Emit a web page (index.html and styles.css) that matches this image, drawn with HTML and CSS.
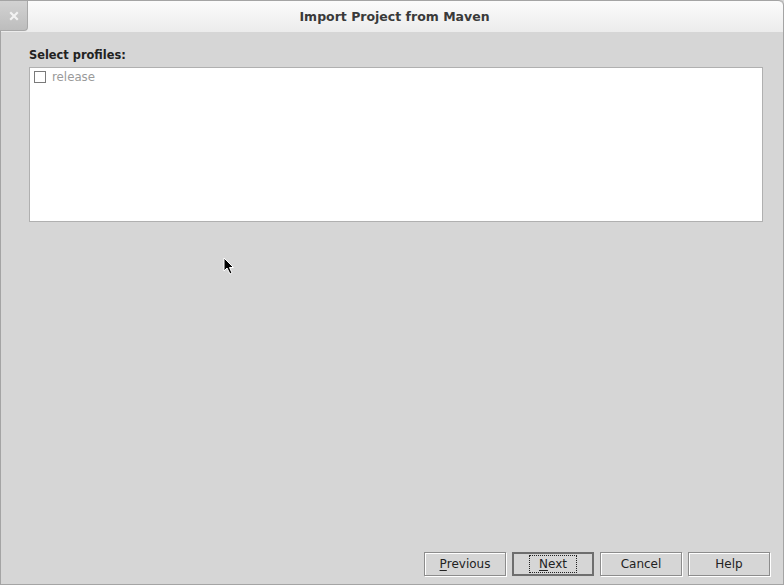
FILE: index.html
```html
<!DOCTYPE html>
<html>
<head>
<meta charset="utf-8">
<link rel="stylesheet" href="styles.css">
</head>
<body>
<div class="window">
  <div class="titlebar">
    <div class="close">
      <svg width="10" height="10" viewBox="0 0 10 10"><path d="M2 2 L8 8 M8 2 L2 8" stroke="#f2f2f2" stroke-width="2.2" stroke-linecap="square"/></svg>
    </div>
    <div class="title">Import Project from Maven</div>
  </div>
  <div class="content">
    <div class="label">Select profiles:</div>
    <div class="listbox">
      <div class="item"><span class="check"></span><span class="itemtext">release</span></div>
    </div>
    <div class="buttons">
      <button class="btn"><u>P</u>revious</button>
      <button class="btn default"><span class="focus"><u>N</u>ext</span></button>
      <button class="btn">Cancel</button>
      <button class="btn">Help</button>
    </div>
  </div>
  <svg class="cursor" width="14" height="20" viewBox="0 0 14 20"><path d="M1 1 L1 14 L4 11 L7 17 L9 16 L6.5 10.5 L10.5 10.5 Z" fill="#000" stroke="#fff" stroke-width="1"/></svg>
</div>
</body>
</html>
```
FILE: styles.css
```css
html, body {
  margin: 0;
  padding: 0;
  background: #d6d6d6;
}
.window {
  position: relative;
  width: 784px;
  height: 585px;
  box-sizing: border-box;
  border: 1px solid #a4a4a4;
  border-top: none;
  border-top-right-radius: 5px;
  display: flex;
  flex-direction: column;
  background: #d6d6d6;
  font-family: "DejaVu Sans", sans-serif;
}
.titlebar {
  height: 32px;
  flex: none;
  display: flex;
  align-items: stretch;
  background: linear-gradient(#fbfbfb, #ececec);
  border-top: 1px solid #a4a4a4;
  border-top-right-radius: 5px;
  box-sizing: border-box;
}
.close {
  width: 28px;
  margin-left: -1px;
  height: 30px;
  display: flex;
  align-items: center;
  justify-content: center;
  background: linear-gradient(#d2d2d2, #bdbdbd);
  border-right: 1px solid #a8a8a8;
  border-bottom: 1px solid #a8a8a8;
  border-bottom-right-radius: 4px;
  box-sizing: border-box;
}
.title {
  flex: 1;
  text-align: center;
  line-height: 31px;
  font-size: 12.5px;
  font-weight: bold;
  color: #3a3a3a;
  padding-right: 22px;
}
.content {
  flex: 1;
  display: flex;
  flex-direction: column;
  padding: 15px 13px 8px 28px;
}
.label {
  font-size: 11.4px;
  font-weight: bold;
  color: #222;
  line-height: 16px;
  margin-bottom: 4px;
}
.listbox {
  background: #fff;
  border: 1px solid #b0b0b0;
  box-sizing: border-box;
  height: 155px;
  width: 734px;
  padding: 2px 4px;
}
.item {
  display: flex;
  align-items: center;
  height: 14px;
}
.check {
  width: 12px;
  height: 12px;
  border: 1px solid #7a7a7a;
  box-sizing: border-box;
  background: #fff;
  margin-right: 6px;
}
.itemtext {
  font-size: 11.8px;
  color: #9a9a9a;
}
.buttons {
  margin-top: auto;
  display: flex;
  justify-content: flex-end;
  gap: 6px;
}
.btn {
  width: 82px;
  height: 24px;
  box-sizing: border-box;
  background: #d6d6d6;
  border: 1px solid #8c8c8c;
  box-shadow: inset 1px 1px 0 #ffffff, 1px 1px 0 #ffffff;
  font-family: "DejaVu Sans", sans-serif;
  font-size: 12px;
  color: #222;
  padding: 0;
  display: flex;
  align-items: center;
  justify-content: center;
}
.btn.default {
  border: 2px solid #6e6e6e;
  box-shadow: none;
}
.focus {
  border: 1px dotted #222;
  padding: 1px 9px;
  line-height: 14px;
}
u {
  text-decoration: underline;
  text-underline-offset: 2px;
}
.cursor {
  position: absolute;
  left: 222px;
  top: 257px;
}
```
